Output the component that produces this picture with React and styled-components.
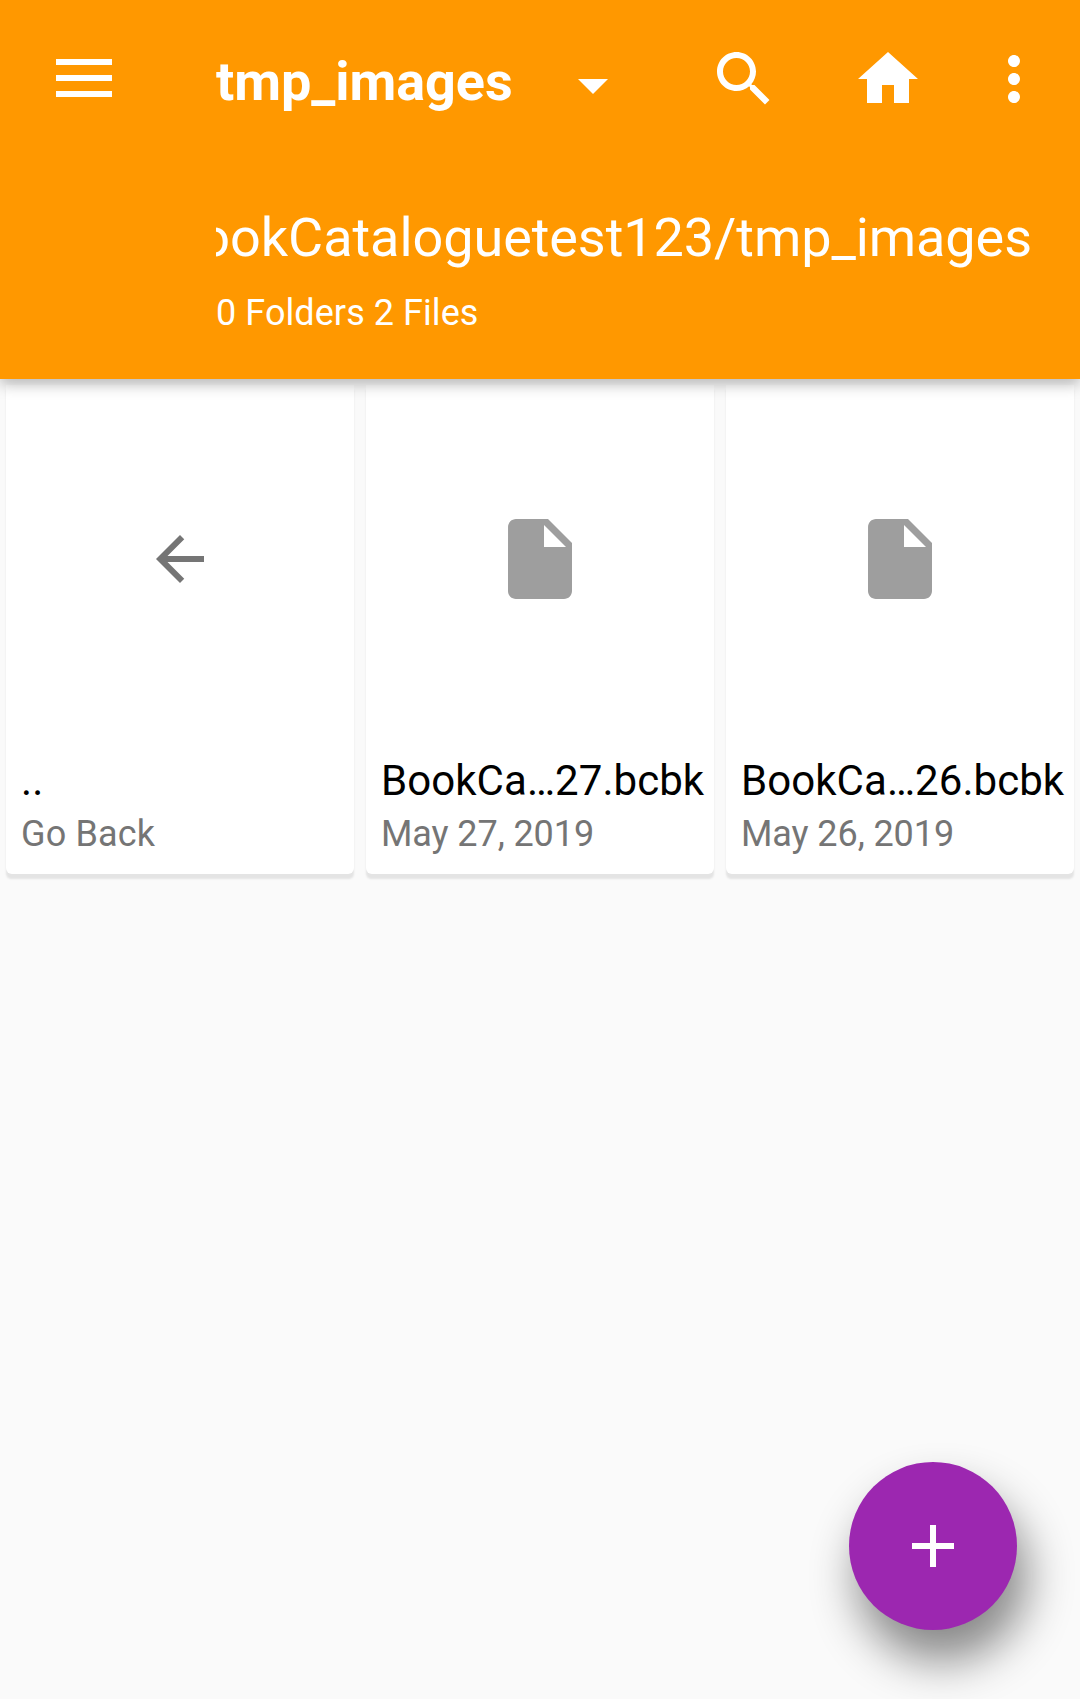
import React from "react";
import styled, { createGlobalStyle } from "styled-components";

const GlobalStyle = createGlobalStyle`
  * { box-sizing: border-box; }
  body { margin: 0; background: #fafafa; font-family: Roboto, "Noto Sans", sans-serif; }
  button { border: 0; padding: 0; background: none; color: inherit; font: inherit; }
`;

const Screen = styled.div`
  width: 1080px;
  height: 1699px;
  overflow: hidden;
  background: #fafafa;
`;

const Header = styled.header`
  position: relative;
  z-index: 1;
  height: 379px;
  background: #ff9800;
  color: #fff;
  box-shadow: 0 5px 14px rgba(0, 0, 0, 0.28);
`;

const Toolbar = styled.div`
  display: flex;
  align-items: center;
  height: 158px;
  padding: 0 30px 0 48px;
`;

const IconButton = styled.button`
  display: block;
  flex: none;
  height: 72px;
  margin-left: ${(p) => p.$gap || 0}px;
`;

const Glyph = styled.svg`
  display: block;
  width: ${(p) => p.$size}px;
  height: ${(p) => p.$size}px;
  fill: currentColor;
`;

const MenuButton = styled(IconButton)`
  margin-bottom: 2px;
`;

const Title = styled.h1`
  flex: 1;
  margin: 0 0 0 96px;
  padding-top: 5px;
  font-size: 54px;
  line-height: 64px;
  font-weight: 700;
  letter-spacing: -0.05px;
  white-space: nowrap;
`;

const DropDown = styled(IconButton)`
  margin: 12px 79px 0 0;
`;

const Summary = styled.div`
  padding: 48px 48px 0 216px;
`;

const Path = styled.div`
  display: flex;
  justify-content: flex-end;
  overflow: hidden;
  font-size: 54px;
  line-height: 64px;
  letter-spacing: -0.07px;
  white-space: nowrap;
`;

const Counts = styled.div`
  margin-top: 22px;
  font-size: 36px;
  line-height: 42px;
  letter-spacing: 0.07px;
`;

const Grid = styled.main`
  display: grid;
  grid-template-columns: repeat(3, 348px);
  gap: 12px;
  padding: 6px;
`;

const Card = styled.article`
  height: 489px;
  border-radius: 0 0 6px 6px;
  background: #fff;
  box-shadow: 0 5px 2px -0.5px #e4e4e4;
`;

const Preview = styled.div`
  display: flex;
  align-items: center;
  justify-content: center;
  height: 348px;
  color: ${(p) => p.$color};
`;

const Name = styled.div`
  padding: 23px 0 0 15px;
  color: #000;
  font-size: 42px;
  line-height: 50px;
  letter-spacing: 0.06px;
  white-space: nowrap;
`;

const Detail = styled.div`
  padding: 7px 0 0 15px;
  color: #757575;
  font-size: 36px;
  line-height: 42px;
  letter-spacing: ${(p) => p.$tracking}px;
`;

const Fab = styled.button`
  position: fixed;
  left: 849px;
  top: 1462px;
  display: flex;
  align-items: center;
  justify-content: center;
  width: 168px;
  height: 168px;
  border-radius: 50%;
  background: #9c27b0;
  color: #fff;
  box-shadow: 9px 30px 46px 1px rgba(0, 0, 0, 0.46);
`;

const ICONS = {
  menu: "M2.67 5.67h18.66v2H2.67zM2.67 11h18.66v2H2.67zM2.67 16.33h18.66v2H2.67z",
  down: "M7 10l5 5 5-5z",
  search:
    "M15.5 14h-.79l-.28-.27C15.41 12.59 16 11.11 16 9.5 16 5.91 13.09 3 9.5 3S3 5.91 3 9.5 5.91 16 9.5 16c1.61 0 3.09-.59 4.23-1.57l.27.28v.79l5 4.99L20.49 19l-4.99-5zm-6 0C7.01 14 5 11.99 5 9.5S7.01 5 9.5 5 14 7.01 14 9.5 11.99 14 9.5 14z",
  home: "M10 20v-6h4v6h5v-8h3L12 3 2 12h3v8z",
  more: "M12 8c1.1 0 2-.9 2-2s-.9-2-2-2-2 .9-2 2 .9 2 2 2zm0 2c-1.1 0-2 .9-2 2s.9 2 2 2 2-.9 2-2-.9-2-2-2zm0 6c-1.1 0-2 .9-2 2s.9 2 2 2 2-.9 2-2-.9-2-2-2z",
  back: "M20 11H7.83l5.59-5.59L12 4l-8 8 8 8 1.41-1.41L7.83 13H20v-2z",
  file: "M6 2c-1.1 0-1.99.9-1.99 2L4 20c0 1.1.89 2 1.99 2H18c1.1 0 2-.9 2-2V8l-6-6H6zm7 7V3.5L18.5 9H13z",
  add: "M19 13h-6v6h-2v-6H5v-2h6V5h2v6h6v2z",
};

const Icon = ({ name, size = 72 }) => (
  <Glyph $size={size} viewBox="0 0 24 24" aria-hidden="true">
    <path d={ICONS[name]} />
  </Glyph>
);

const ENTRIES = [
  { name: "..", detail: "Go Back", icon: "back", size: 72, color: "#757575", tracking: 0.15 },
  { name: "BookCa…27.bcbk", detail: "May 27, 2019", icon: "file", size: 96, color: "#9e9e9e", tracking: -0.09 },
  { name: "BookCa…26.bcbk", detail: "May 26, 2019", icon: "file", size: 96, color: "#9e9e9e", tracking: -0.09 },
];

export default function App() {
  return (
    <Screen>
      <GlobalStyle />
      <Header>
        <Toolbar>
          <MenuButton aria-label="Menu"><Icon name="menu" /></MenuButton>
          <Title>tmp_images</Title>
          <DropDown aria-label="Choose folder"><Icon name="down" /></DropDown>
          <IconButton aria-label="Search"><Icon name="search" /></IconButton>
          <IconButton aria-label="Home" $gap={72}><Icon name="home" /></IconButton>
          <IconButton aria-label="More" $gap={54}><Icon name="more" /></IconButton>
        </Toolbar>
        <Summary>
          <Path><span>BookCataloguetest123/tmp_images</span></Path>
          <Counts>0 Folders 2 Files</Counts>
        </Summary>
      </Header>
      <Grid>
        {ENTRIES.map((e) => (
          <Card key={e.name}>
            <Preview $color={e.color}><Icon name={e.icon} size={e.size} /></Preview>
            <Name>{e.name}</Name>
            <Detail $tracking={e.tracking}>{e.detail}</Detail>
          </Card>
        ))}
      </Grid>
      <Fab aria-label="Add"><Icon name="add" /></Fab>
    </Screen>
  );
}
